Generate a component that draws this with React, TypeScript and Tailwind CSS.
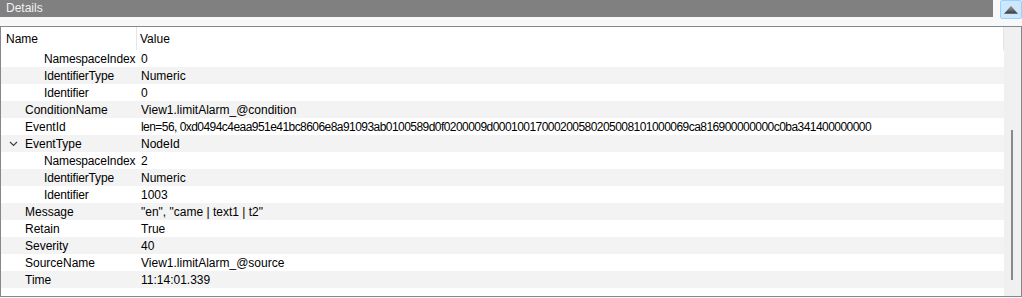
import React from "react";

type Row = { name: string; value: string; level: number; expanded?: boolean; tight?: boolean };

const rows: Row[] = [
  { name: "NamespaceIndex", value: "0", level: 2 },
  { name: "IdentifierType", value: "Numeric", level: 2 },
  { name: "Identifier", value: "0", level: 2 },
  { name: "ConditionName", value: "View1.limitAlarm_@condition", level: 1 },
  {
    name: "EventId",
    value:
      "len=56, 0xd0494c4eaa951e41bc8606e8a91093ab0100589d0f0200009d00010017000200580205008101000069ca816900000000c0ba341400000000",
    level: 1,
    tight: true,
  },
  { name: "EventType", value: "NodeId", level: 1, expanded: true },
  { name: "NamespaceIndex", value: "2", level: 2 },
  { name: "IdentifierType", value: "Numeric", level: 2 },
  { name: "Identifier", value: "1003", level: 2 },
  { name: "Message", value: '"en", "came | text1 | t2"', level: 1 },
  { name: "Retain", value: "True", level: 1 },
  { name: "Severity", value: "40", level: 1 },
  { name: "SourceName", value: "View1.limitAlarm_@source", level: 1 },
  { name: "Time", value: "11:14:01.339", level: 1 },
];

export default function App() {
  return (
    <div
      className="w-[1022px] h-[298px] bg-[#f8f8f8] text-[12px] text-black overflow-hidden"
      style={{ fontFamily: '"Liberation Sans", Arial, sans-serif' }}
    >
      {/* title bar */}
      <div className="flex h-[26px]">
        <div className="w-[993px] h-[17px] bg-[#808080] text-[#f2f2f2] pl-[6px] leading-[17px]">
          Details
        </div>
        <div className="ml-[7px] w-[22px] h-[19px] rounded-[2px] border border-[#99d1ff] bg-[#cce8ff] flex items-center justify-center">
          <svg width="14" height="8" viewBox="0 0 14 8">
            <defs>
              <linearGradient id="tri" x1="0" y1="0" x2="0" y2="1">
                <stop offset="0" stopColor="#9a9a9a" />
                <stop offset="1" stopColor="#3c3c3c" />
              </linearGradient>
            </defs>
            <path d="M7 0.5 L13.5 7.5 L0.5 7.5 Z" fill="url(#tri)" stroke="#555" strokeWidth="0.6" />
          </svg>
        </div>
      </div>

      {/* panel */}
      <div className="w-[1022px] h-[271px] border border-[#828790] bg-white flex">
        <div className="w-[1003px] flex flex-col">
          {/* header */}
          <div className="flex h-[23px] items-center">
            <div className="w-[136px] pl-[5px] h-full flex items-center border-r border-[#e5e5e5]">Name</div>
            <div className="flex-1 pl-[3px] h-full flex items-center border-r border-[#e5e5e5]">Value</div>
          </div>
          {rows.map((r, i) => (
            <div
              key={i}
              className={`flex h-[17px] items-center whitespace-nowrap ${i % 2 === 1 ? "bg-[#f3f3f3]" : "bg-white"}`}
            >
              <div className="w-[140px] flex items-center shrink-0">
                <div className="w-[23px] shrink-0 flex items-center justify-center pl-[2px]">
                  {r.expanded && (
                    <svg width="9" height="6" viewBox="0 0 9 6">
                      <path d="M1 1 L4.5 4.5 L8 1" fill="none" stroke="#404040" strokeWidth="1.2" />
                    </svg>
                  )}
                </div>
                <div className={r.level === 2 ? "pl-[20px] tracking-[-0.15px]" : "pl-[1px]"}>{r.name}</div>
              </div>
              <div className={r.tight ? "tracking-[-0.55px]" : ""}>{r.value}</div>
            </div>
          ))}
        </div>
        {/* scrollbar */}
        <div className="w-[17px] bg-[#f0f0f0] relative">
          <div className="absolute left-[7px] top-[103px] w-[2px] h-[150px] bg-[#8a8a8a]" />
        </div>
      </div>
    </div>
  );
}
